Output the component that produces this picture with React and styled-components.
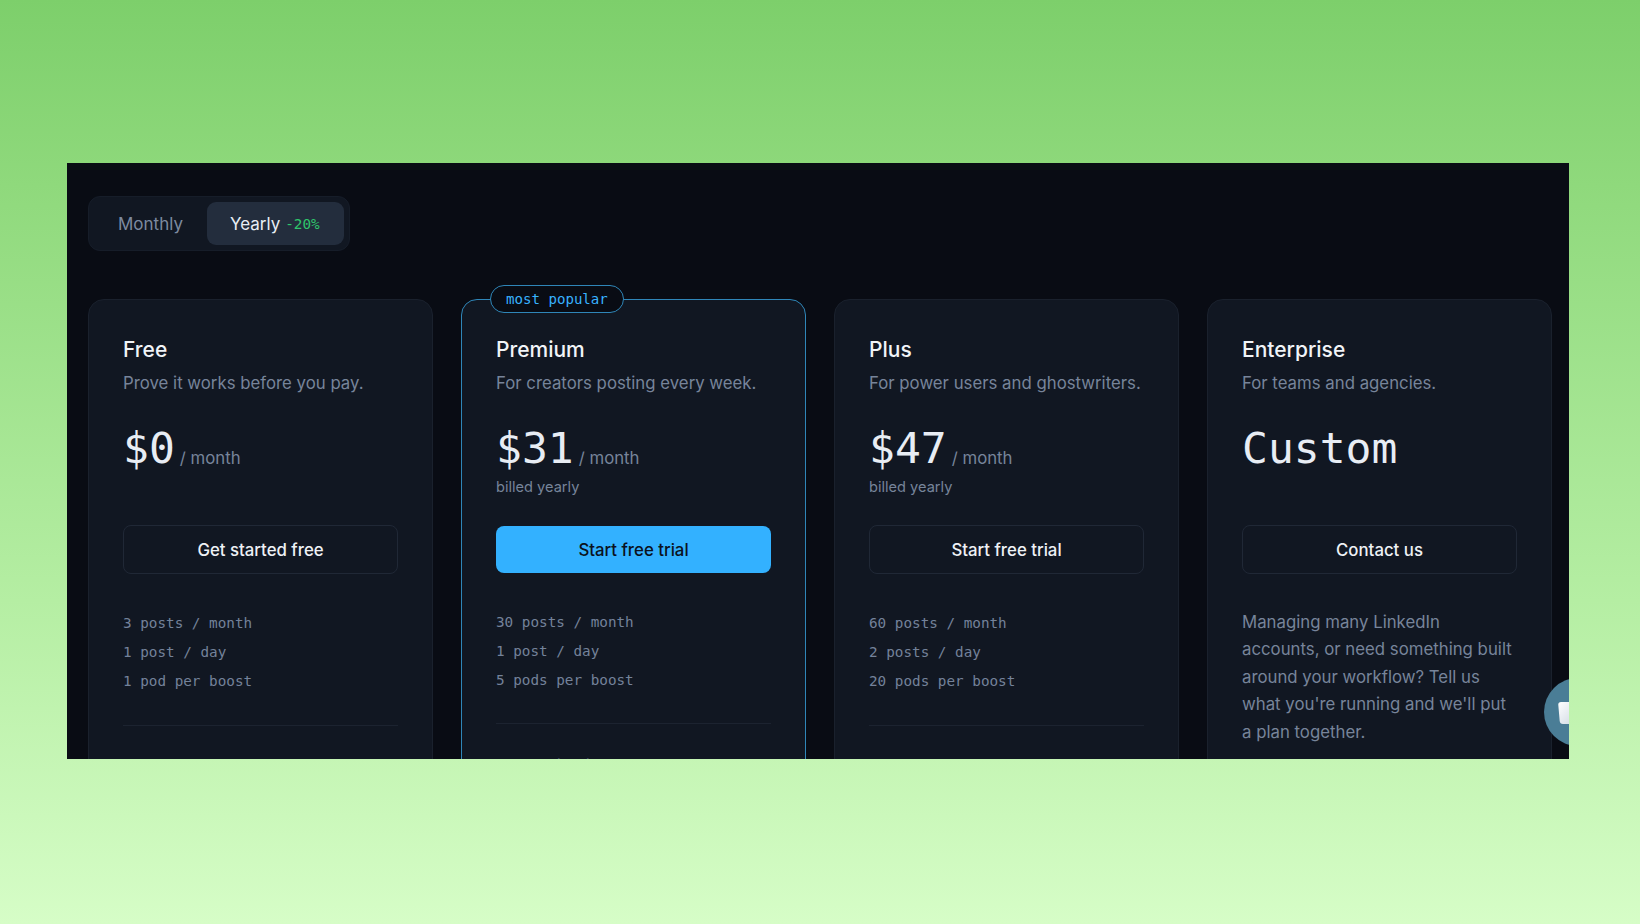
import React from 'react';
import styled, { createGlobalStyle } from 'styled-components';

const GlobalStyle = createGlobalStyle`
  html, body { margin: 0; padding: 0; }
  body {
    font-family: 'Inter', 'Liberation Sans', sans-serif;
    background: #d5fcc5;
  }
`;

const plans = [
  {
    name: 'Free',
    tagline: 'Prove it works before you pay.',
    price: '$0',
    per: '/ month',
    cta: 'Get started free',
    features: ['3 posts / month', '1 post / day', '1 pod per boost'],
  },
  {
    name: 'Premium',
    tagline: 'For creators posting every week.',
    price: '$31',
    per: '/ month',
    billed: 'billed yearly',
    cta: 'Start free trial',
    features: ['30 posts / month', '1 post / day', '5 pods per boost'],
    popular: true,
    extra: 'Everything in Free, plus',
  },
  {
    name: 'Plus',
    tagline: 'For power users and ghostwriters.',
    price: '$47',
    per: '/ month',
    billed: 'billed yearly',
    cta: 'Start free trial',
    features: ['60 posts / month', '2 posts / day', '20 pods per boost'],
  },
  {
    name: 'Enterprise',
    tagline: 'For teams and agencies.',
    price: 'Custom',
    cta: 'Contact us',
    note: "Managing many LinkedIn accounts, or need something built around your workflow? Tell us what you're running and we'll put a plan together.",
  },
];

const Page = styled.div`
  height: 924px;
  box-sizing: border-box;
  padding: 163px 71px 0 67px;
  overflow: hidden;
  background: linear-gradient(180deg, #7dcf6b 0%, #8fd97c 20%, #b5eea3 65%, #d6fdc7 100%);
`;

const Panel = styled.section`
  position: relative;
  height: 596px;
  box-sizing: border-box;
  padding: 33px 16px 0 21px;
  overflow: hidden;
  background: #090c14;
`;

const Toggle = styled.div`
  display: inline-flex;
  box-sizing: border-box;
  height: 55px;
  padding: 5px;
  border: 1px solid #161d29;
  border-radius: 12px;
  background: #111722;
`;

const ToggleOption = styled.div`
  display: flex;
  align-items: center;
  gap: 5px;
  height: 43px;
  padding: 0 24px 0 ${(p) => (p.$active ? '23px' : '24px')};
  border-radius: 9px;
  font-size: 17px;
  color: ${(p) => (p.$active ? '#e8edf4' : '#7d8aa0')};
  background: ${(p) => (p.$active ? '#232d3d' : 'transparent')};
`;

const Discount = styled.span`
  font-family: 'DejaVu Sans Mono', monospace;
  font-size: 14.3px;
  color: #2fc56b;
`;

const Cards = styled.div`
  display: grid;
  grid-template-columns: repeat(4, 345px);
  column-gap: 28px;
  margin-top: 48px;
`;

const Card = styled.article`
  position: relative;
  box-sizing: border-box;
  height: 520px;
  padding: 33px 34px;
  border: 1px solid ${(p) => (p.$popular ? '#2f86b8' : '#1a212d')};
  border-radius: 16px;
  background: #111722;
`;

const Badge = styled.div`
  position: absolute;
  top: -15px;
  left: 28px;
  height: 28px;
  box-sizing: border-box;
  padding: 0 15px;
  display: flex;
  align-items: center;
  border: 1px solid #2f86b8;
  border-radius: 14px;
  background: #090c14;
  font-family: 'DejaVu Sans Mono', monospace;
  font-size: 14.1px;
  color: #38b2ff;
`;

const PlanName = styled.h3`
  margin: 2px 0 0;
  height: 30px;
  line-height: 30px;
  font-size: 21px;
  font-weight: 500;
  color: #f1f4f8;
`;

const Tagline = styled.p`
  margin: 5px 0 0;
  line-height: 26px;
  font-size: 16.8px;
  color: #77849a;
`;

const PriceRow = styled.div`
  display: flex;
  align-items: baseline;
  gap: 5px;
  margin-top: 21px;
  height: 59px;
  line-height: 62px;
`;

const Price = styled.span`
  font-family: 'DejaVu Sans Mono', monospace;
  font-size: 43px;
  color: #e8edf4;
`;

const Per = styled.span`
  font-size: 16.8px;
  color: #77849a;
  transform: translateY(1px);
`;

const Billed = styled.div`
  height: 22px;
  line-height: 22px;
  font-size: 14.6px;
  color: #77849a;
`;

const Cta = styled.button`
  display: block;
  width: 100%;
  box-sizing: border-box;
  height: ${(p) => (p.$primary ? '47px' : '49px')};
  margin-top: ${(p) => (p.$primary ? '28px' : '27px')};
  border: ${(p) => (p.$primary ? 'none' : '1px solid #202836')};
  border-radius: 8px;
  font-family: inherit;
  font-size: 16.8px;
  font-weight: 500;
  color: ${(p) => (p.$primary ? '#0b1220' : '#eef1f5')};
  background: ${(p) => (p.$primary ? '#33b1ff' : 'transparent')};
`;

const Features = styled.ul`
  list-style: none;
  margin: 35px 0 0;
  padding: 0 0 ${(p) => (p.$popular ? '29px' : '30px')};
  border-bottom: 1px solid #1c2330;
`;

const Feature = styled.li`
  height: 28.8px;
  line-height: 28.8px;
  font-family: 'DejaVu Sans Mono', monospace;
  font-size: 14.3px;
  color: #74829a;
`;

const Note = styled.p`
  margin: 35px 0 0;
  line-height: 27.4px;
  font-size: 16.8px;
  color: #77849a;
`;

const Extra = styled.p`
  margin: 29px 0 0;
  line-height: 26px;
  font-size: 16.8px;
  color: #77849a;
`;

const ChatBubble = styled.div`
  position: absolute;
  top: 515px;
  left: 1477px;
  width: 68px;
  height: 68px;
  border-radius: 50%;
  background: #4a7d96;
`;

const ChatIcon = styled.div`
  position: absolute;
  top: 24px;
  left: 15px;
  width: 24px;
  height: 22px;
  border-radius: 3px;
  background: linear-gradient(135deg, #ffffff, #c5d0dc);
  transform: skewX(5deg);
`;

export default function App() {
  return (
    <Page>
      <GlobalStyle />
      <Panel>
        <Toggle>
          <ToggleOption>Monthly</ToggleOption>
          <ToggleOption $active>
            Yearly <Discount>-20%</Discount>
          </ToggleOption>
        </Toggle>
        <Cards>
          {plans.map((plan) => (
            <Card key={plan.name} $popular={plan.popular}>
              {plan.popular && <Badge>most popular</Badge>}
              <PlanName>{plan.name}</PlanName>
              <Tagline>{plan.tagline}</Tagline>
              <PriceRow>
                <Price>{plan.price}</Price>
                {plan.per && <Per>{plan.per}</Per>}
              </PriceRow>
              <Billed>{plan.billed}</Billed>
              <Cta $primary={plan.popular}>{plan.cta}</Cta>
              {plan.features && (
                <Features $popular={plan.popular}>
                  {plan.features.map((f) => (
                    <Feature key={f}>{f}</Feature>
                  ))}
                </Features>
              )}
              {plan.note && <Note>{plan.note}</Note>}
              {plan.extra && <Extra>{plan.extra}</Extra>}
            </Card>
          ))}
        </Cards>
        <ChatBubble>
          <ChatIcon />
        </ChatBubble>
      </Panel>
    </Page>
  );
}
